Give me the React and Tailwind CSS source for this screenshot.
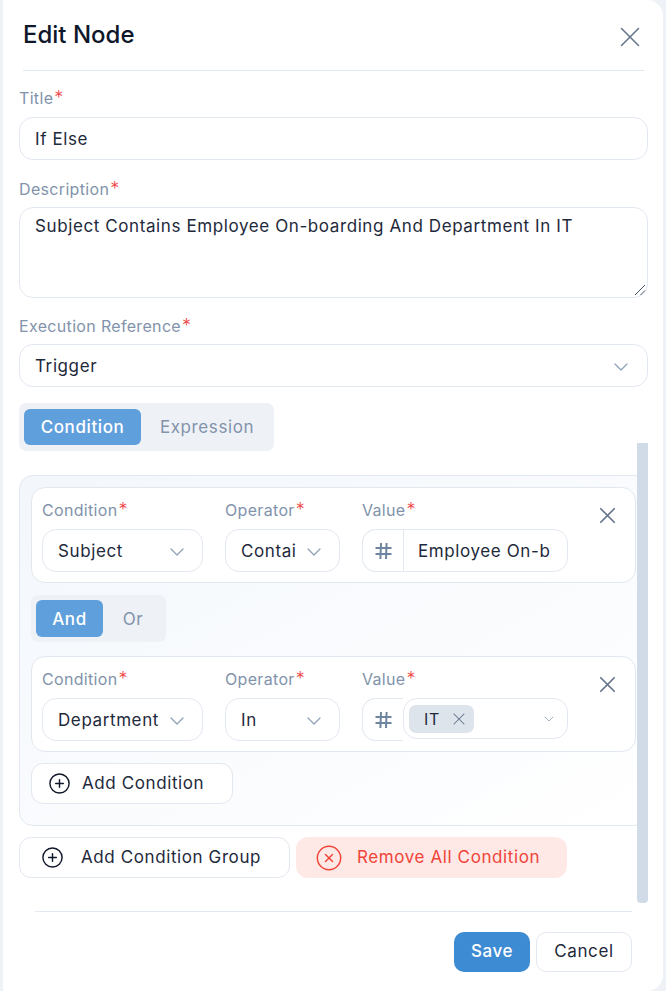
import React from "react";
import { X, ChevronDown, CirclePlus, CircleX } from "lucide-react";

function Label({ children, className = "" }) {
  return (
    <div className={"flex items-start text-[16px] leading-[22px] tracking-[0.33px] text-[#8293ab] " + className}>
      <span>{children}</span>
      <span className="ml-[1px] text-[18px] font-light leading-[21px] tracking-normal text-[#ef4444]">*</span>
    </div>
  );
}

function Field({ children, className = "" }) {
  return (
    <div className={"flex items-center rounded-[14px] border border-[#e2e8f0] bg-white pt-[2px] text-[#1e293b] " + className}>
      {children}
    </div>
  );
}

function Chevron({ size = 24 }) {
  return <ChevronDown size={size} strokeWidth={1.25} className="shrink-0 text-[#8ea0b8]" />;
}

function HashIcon() {
  return (
    <svg width="17" height="18" viewBox="0 0 17 18" fill="none" stroke="#6f849e" strokeWidth="2" className="shrink-0">
      <path d="M6 1 L5.4 17 M11.6 1 L11 17 M0.5 6 H16.5 M0.5 12 H16.5" />
    </svg>
  );
}

function Row({ cond, op, value }) {
  return (
    <div className="flex h-[96px] rounded-[14px] border border-[#e2e8f0] bg-white pl-[10px] pt-[11px]">
      <div className="w-[161px]">
        <Label>Condition</Label>
        <Field className="mt-[8px] h-[43px] justify-between pl-[15px] pr-[13px]">
          <span>{cond}</span>
          <Chevron />
        </Field>
      </div>
      <div className="ml-[22px] w-[115px]">
        <Label>Operator</Label>
        <Field className="mt-[8px] h-[43px] justify-between pl-[15px] pr-[13px]">
          <span>{op}</span>
          <Chevron />
        </Field>
      </div>
      <div className="ml-[22px] w-[206px]">
        <Label>Value</Label>
        <div className="mt-[8px] flex h-[43px] w-full">{value}</div>
      </div>
      <X size={27} strokeWidth={1.5} className="ml-[26px] mt-[3px] text-[#64748b]" />
    </div>
  );
}

function HashBox() {
  return (
    <div className="flex h-full w-[41px] shrink-0 items-center justify-center rounded-l-[14px] border border-r-0 border-[#e2e8f0] bg-white">
      <HashIcon />
    </div>
  );
}

function Seg({ items, className, btn }) {
  return (
    <div className={"flex items-center rounded-[7px] bg-[#eef1f6] px-[5px] " + className}>
      <div className={"flex shrink-0 items-center justify-center rounded-[6px] bg-[#5fa0dc] pt-[2px] font-medium text-white " + btn[0]}>{items[0]}</div>
      <div className={"flex shrink-0 items-center justify-center pt-[2px] text-[#8293ab] " + btn[1]}>{items[1]}</div>
    </div>
  );
}

export default function App() {
  return (
    <div
      className="h-[991px] w-[666px] overflow-hidden bg-[#eef1f6] pl-[3px] pr-[3px] text-[17px] tracking-[0.6px] text-[#1e293b]"
      style={{ fontFamily: '"Inter", sans-serif' }}
    >
      <div className="relative h-full w-full rounded-r-[16px] bg-white">
        <div className="ml-[20px] mr-[19px] flex h-[71px] items-start justify-between border-b border-[#e2e8f0] pt-[18px]">
          <h1 className="text-[24px] font-medium leading-[34px] tracking-[0px] text-[#0f172a]">Edit Node</h1>
          <X size={34} strokeWidth={1.1} className="mr-[-3px] mt-[2px] text-[#64748b]" />
        </div>
        <div className="pl-[16px] pr-[15px]">
          <Label className="mt-[16px]">Title</Label>
          <Field className="mt-[8px] h-[43px] pl-[15px]">If Else</Field>
          <Label className="mt-[18px]">Description</Label>
          <div className="relative mt-[7px] h-[91px] rounded-[14px] border border-[#e2e8f0] pl-[15px] pt-[6px] leading-[24px]">
            Subject Contains Employee On-boarding And Department In IT
            <svg width="12" height="12" viewBox="0 0 12 12" className="absolute bottom-[1px] right-[1px] text-[#475569]">
              <path d="M1 11 L11 1 M6.5 11 L11 6.5" stroke="currentColor" strokeWidth="1" fill="none" />
            </svg>
          </div>
          <Label className="mt-[17px]">Execution Reference</Label>
          <Field className="mt-[7px] h-[43px] justify-between pl-[15px] pr-[14px]">
            <span>Trigger</span>
            <Chevron />
          </Field>
          <Seg items={["Condition", "Expression"]} className="mt-[16px] h-[48px] w-[255px]" btn={["h-[36px] w-[117px]", "w-[132px]"]} />
          <div className="relative mt-[24px] h-[351px] w-[629px] rounded-[14px] border border-[#e2e8f0] bg-gradient-to-br from-[#f3f7fc] to-white pl-[11px] pt-[11px]">
            <div className="w-[605px]">
              <Row
                cond="Subject"
                op="Contai"
                value={
                  <>
                    <HashBox />
                    <div className="flex flex-1 items-center overflow-hidden whitespace-nowrap rounded-r-[14px] border border-[#e2e8f0] pl-[14px] pt-[2px]">Employee On-b</div>
                  </>
                }
              />
              <Seg items={["And", "Or"]} className="mt-[12px] h-[47px] w-[135px]" btn={["h-[37px] w-[67px]", "w-[60px]"]} />
              <div className="mt-[14px]">
                <Row
                  cond="Department"
                  op="In"
                  value={
                    <>
                      <HashBox />
                      <div className="flex h-[41px] flex-1 items-center justify-between rounded-[14px] border border-[#e2e8f0] bg-white pl-[5px] pr-[10px]">
                        <span className="flex h-[28px] w-[65px] items-center justify-between rounded-[7px] bg-[#dde4ec] pl-[15px] pr-[5px] text-[16px]">
                          IT
                          <X size={20} strokeWidth={1.25} className="text-[#64748b]" />
                        </span>
                        <Chevron size={16} />
                      </div>
                    </>
                  }
                />
              </div>
              <div className="mt-[11px] flex h-[41px] w-[202px] items-center gap-[11px] rounded-[12px] border border-[#e2e8f0] bg-white pl-[16px]">
                <CirclePlus size={23} strokeWidth={1.5} className="text-[#0f172a]" />
                Add Condition
              </div>
            </div>
          </div>
          <div className="mt-[11px] flex gap-[6px]">
            <div className="flex h-[41px] w-[271px] items-center gap-[17px] rounded-[12px] border border-[#e2e8f0] bg-white pl-[21px]">
              <CirclePlus size={23} strokeWidth={1.5} className="text-[#0f172a]" />
              Add Condition Group
            </div>
            <div className="flex h-[41px] w-[271px] items-center gap-[14px] rounded-[12px] bg-[#fee9e7] pl-[19px] text-[#f04438]">
              <CircleX size={28} strokeWidth={1.25} />
              Remove All Condition
            </div>
          </div>
        </div>
        <div className="absolute left-[634px] top-[443px] h-[460px] w-[11px] rounded-b-[4px] bg-[#d0dbe7]" />
        <div className="ml-[32px] mr-[31px] mt-[33px] flex justify-end gap-[6px] border-t border-[#e2e8f0] pt-[20px]">
          <div className="flex h-[40px] w-[76px] items-center justify-center rounded-[10px] bg-[#3d8bd3] font-medium text-white">Save</div>
          <div className="flex h-[40px] w-[96px] items-center justify-center rounded-[10px] border border-[#e2e8f0] bg-white">Cancel</div>
        </div>
      </div>
    </div>
  );
}
